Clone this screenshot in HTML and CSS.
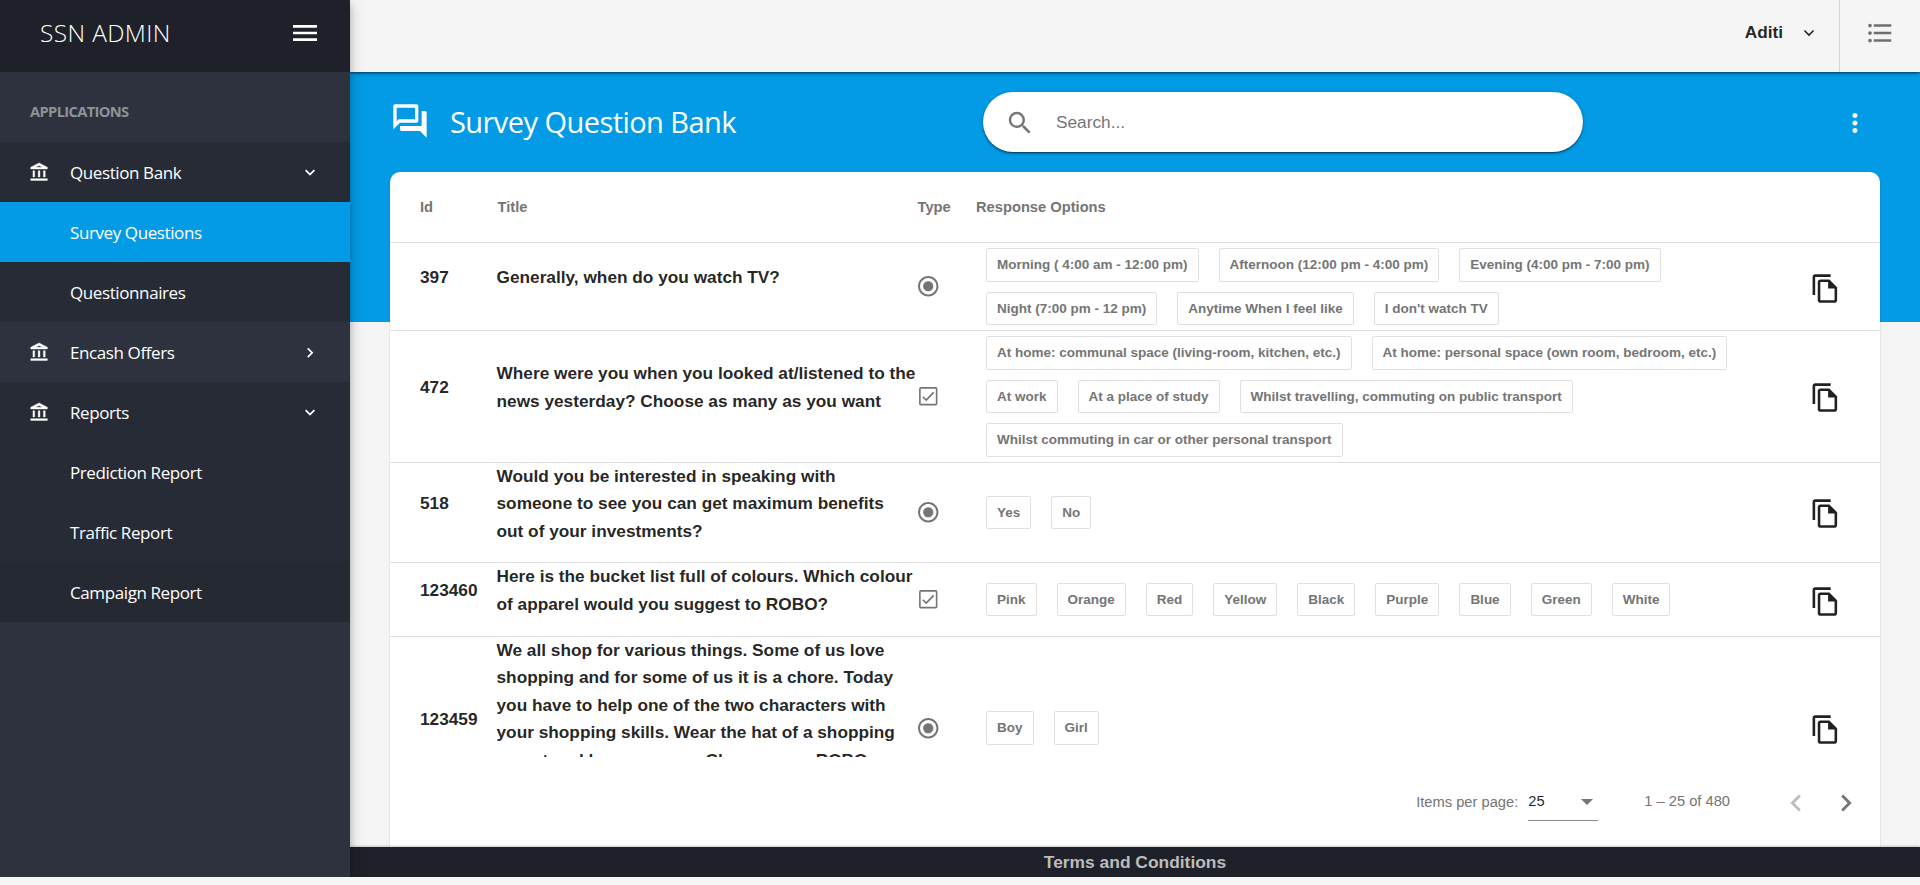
FILE: index.html
```html
<!DOCTYPE html>
<html lang="en">
<head>
<meta charset="utf-8">
<title>Survey Question Bank</title>
<link rel="stylesheet" href="styles.css">
</head>
<body>
<svg class="defs" width="0" height="0">
  <symbol id="bank" viewBox="0 0 24 24"><path stroke="currentColor" stroke-width=".45" d="M6.5 10h-2v7h2v-7zm6 0h-2v7h2v-7zm8.5 9H2v2h19v-2zm-2.5-9h-2v7h2v-7zm-7-6L15.500 6H7.500l4-2m0-3L2 6v2h19V6l-9.5-5z"/></symbol>
  <symbol id="down" viewBox="0 0 24 24"><path d="M7.41 7.84L12 12.42l4.59-4.58L18 9.25l-6 6-6-6z"/></symbol>
  <symbol id="right" viewBox="0 0 24 24"><path d="M8.59 16.34l4.58-4.59-4.58-4.59L10 5.75l6 6-6 6z"/></symbol>
  <symbol id="prev" viewBox="0 0 24 24"><path d="M15.41 7.41L14 6l-6 6 6 6 1.41-1.41L10.83 12z"/></symbol>
  <symbol id="next" viewBox="0 0 24 24"><path d="M10 6L8.59 7.41 13.17 12l-4.58 4.59L10 18l6-6z"/></symbol>
  <symbol id="copy" viewBox="0 0 24 24"><path d="M16 1H4c-1.1 0-2 .9-2 2v14h2V3h12V1zm-1 4H8c-1.1 0-1.99.9-1.99 2L6 21c0 1.1.89 2 1.99 2H19c1.1 0 2-.9 2-2V11l-6-6zM8 21V7h6v5h5v9H8z"/></symbol>
  <symbol id="radio" viewBox="0 0 24 24"><path d="M12 7c-2.76 0-5 2.24-5 5s2.24 5 5 5 5-2.24 5-5-2.24-5-5-5zm0-5C6.48 2 2 6.48 2 12s4.48 10 10 10 10-4.48 10-10S17.52 2 12 2zm0 18c-4.42 0-8-3.58-8-8s3.58-8 8-8 8 3.58 8 8-3.58 8-8 8z"/></symbol>
  <symbol id="check" viewBox="0 0 24 24"><g fill="none" stroke="currentColor"><rect x="3.800" y="3.800" width="16.400" height="16.400" rx="1" stroke-width="1.600"/><path d="M6.700 12.500l3.300 3.300 7.300-7.500" stroke-width="1.700"/></g></symbol>
</svg>
<div class="app">
  <aside class="sidebar">
    <div class="brand">
      <span class="brand-name">SSN ADMIN</span>
      <svg class="icon-menu" viewBox="0 0 24 24"><path d="M3 18h18v-2H3v2zm0-5h18v-2H3v2zm0-7v2h18V6H3z"/></svg>
    </div>
    <nav class="nav">
      <div class="nav-heading">APPLICATIONS</div>
      <div class="nav-group open">
        <a class="nav-item"><svg class="nav-icon"><use href="#bank"/></svg><span class="nav-label">Question Bank</span><svg class="nav-arrow"><use href="#down"/></svg></a>
        <a class="nav-item child active">Survey Questions</a>
        <a class="nav-item child">Questionnaires</a>
      </div>
      <div class="nav-group">
        <a class="nav-item"><svg class="nav-icon"><use href="#bank"/></svg><span class="nav-label">Encash Offers</span><svg class="nav-arrow"><use href="#right"/></svg></a>
      </div>
      <div class="nav-group open">
        <a class="nav-item"><svg class="nav-icon"><use href="#bank"/></svg><span class="nav-label">Reports</span><svg class="nav-arrow"><use href="#down"/></svg></a>
        <a class="nav-item child">Prediction Report</a>
        <a class="nav-item child">Traffic Report</a>
        <a class="nav-item child hovered">Campaign Report</a>
      </div>
    </nav>
  </aside>
  <div class="main">
    <header class="toolbar">
      <div class="user"><span>Aditi</span><svg class="user-arrow" viewBox="0 0 24 24"><path d="M6.500 9l5.500 5.500L17.500 9"/></svg></div>
      <div class="quick"><svg class="icon-30" viewBox="0 0 24 24"><path d="M4 10.5c-.83 0-1.5.67-1.5 1.5s.67 1.5 1.5 1.5 1.5-.67 1.5-1.5-.67-1.5-1.5-1.5zm0-6c-.83 0-1.5.67-1.5 1.5S3.17 7.5 4 7.5 5.500 6.83 5.500 6 4.830 4.500 4 4.500zm0 12c-.83 0-1.5.68-1.5 1.5s.68 1.5 1.5 1.5 1.500-.68 1.500-1.500-.67-1.500-1.500-1.500zM7 19h14v-2H7v2zm0-6h14v-2H7v2zm0-8v2h14V5H7z"/></svg></div>
    </header>
    <section class="page">
      <div class="page-header">
        <svg class="icon-forum" viewBox="0 0 24 24"><path d="M15 4v7H5.170L4 12.170V4h11m1-2H3c-.55 0-1 .45-1 1v14l4-4h10c.55 0 1-.45 1-1V3c0-.55-.45-1-1-1zm5 4h-2v9H6v2c0 .55.45 1 1 1h11l4 4V7c0-.55-.45-1-1-1z"/></svg>
        <h1 class="page-title">Survey Question Bank</h1>
        <div class="search">
          <svg class="icon-30" viewBox="0 0 24 24"><path d="M15.500 14h-.79l-.28-.27A6.471 6.471 0 0 0 16 9.500 6.500 6.500 0 1 0 9.500 16c1.610 0 3.090-.59 4.230-1.570l.27.28v.79l5 4.990L20.490 19l-4.990-5zm-6 0C7.010 14 5 11.990 5 9.500S7.010 5 9.500 5 14 7.010 14 9.500 11.990 14 9.500 14z"/></svg>
          <span>Search...</span>
        </div>
        <svg class="icon-30 icon-more" viewBox="0 0 24 24"><path d="M12 8c1.100 0 2-.9 2-2s-.9-2-2-2-2 .9-2 2 .9 2 2 2zm0 2c-1.100 0-2 .9-2 2s.9 2 2 2 2-.9 2-2-.9-2-2-2zm0 6c-1.100 0-2 .9-2 2s.9 2 2 2 2-.9 2-2-.9-2-2-2z"/></svg>
      </div>
      <div class="card">
        <div class="table">
          <div class="row head"><span>Id</span><span class="head-title">Title</span><span>Type</span><span>Response Options</span><span></span></div>
          <div class="row">
            <p>397</p><p>Generally, when do you watch TV?</p>
            <svg class="type"><use href="#radio"/></svg>
            <div class="chips"><span class="chip">Morning ( 4:00 am - 12:00 pm)</span><span class="chip">Afternoon (12:00 pm - 4:00 pm)</span><span class="chip">Evening (4:00 pm - 7:00 pm)</span><span class="chip">Night (7:00 pm - 12 pm)</span><span class="chip">Anytime When I feel like</span><span class="chip">I don't watch TV</span></div>
            <svg class="copy"><use href="#copy"/></svg>
          </div>
          <div class="row">
            <p>472</p><p>Where were you when you looked at/listened to the news yesterday? Choose as many as you want</p>
            <svg class="type"><use href="#check"/></svg>
            <div class="chips"><span class="chip">At home: communal space (living-room, kitchen, etc.)</span><span class="chip">At home: personal space (own room, bedroom, etc.)</span><span class="chip">At work</span><span class="chip">At a place of study</span><span class="chip">Whilst travelling, commuting on public transport</span><span class="chip">Whilst commuting in car or other personal transport</span></div>
            <svg class="copy"><use href="#copy"/></svg>
          </div>
          <div class="row">
            <p>518</p><p>Would you be interested in speaking with<br>someone to see you can get maximum benefits<br>out of your investments?</p>
            <svg class="type"><use href="#radio"/></svg>
            <div class="chips"><span class="chip">Yes</span><span class="chip">No</span></div>
            <svg class="copy"><use href="#copy"/></svg>
          </div>
          <div class="row">
            <p>123460</p><p>Here is the bucket list full of colours. Which colour of apparel would you suggest to ROBO?</p>
            <svg class="type"><use href="#check"/></svg>
            <div class="chips"><span class="chip">Pink</span><span class="chip">Orange</span><span class="chip">Red</span><span class="chip">Yellow</span><span class="chip">Black</span><span class="chip">Purple</span><span class="chip">Blue</span><span class="chip">Green</span><span class="chip">White</span></div>
            <svg class="copy"><use href="#copy"/></svg>
          </div>
          <div class="row">
            <p>123459</p><p class="long">We all shop for various things. Some of us love shopping and for some of us it is a chore. Today you have to help one of the two characters with your shopping skills. Wear the hat of a shopping expert and here you go... Choose your ROBO</p>
            <svg class="type"><use href="#radio"/></svg>
            <div class="chips"><span class="chip">Boy</span><span class="chip">Girl</span></div>
            <svg class="copy"><use href="#copy"/></svg>
          </div>
        </div>
        <div class="paginator">
          <span>Items per page:</span>
          <div class="select"><span>25</span><i class="caret"></i></div>
          <span class="range">1 – 25 of 480</span>
          <svg class="pager disabled"><use href="#prev"/></svg>
          <svg class="pager"><use href="#next"/></svg>
        </div>
      </div>
    </section>
    <footer class="footer">Terms and Conditions</footer>
  </div>
</div>
</body>
</html>
```
FILE: styles.css
```css
* { box-sizing: border-box; }
body {
  margin: 0;
  background: #f5f5f5;
  color: rgba(0, 0, 0, .87);
  font: 17.25px/27.52px "Liberation Sans", Arial, sans-serif;
  overflow: hidden;
}
svg { fill: currentColor; flex: none; display: block; }
.defs { position: absolute; }
.app { display: flex; height: 877px; }

.sidebar {
  position: relative;
  z-index: 3;
  width: 350px;
  flex: none;
  background: #2d323e;
  color: #fff;
  font-family: "Open Sans", "Noto Sans", sans-serif;
  box-shadow: 0 3px 5px -1px rgba(0,0,0,.2), 0 6px 10px rgba(0,0,0,.14), 0 1px 18px rgba(0,0,0,.12);
}
.brand {
  display: flex;
  align-items: center;
  justify-content: space-between;
  height: 72px;
  padding: 0 29px 6px 40px;
  background: #1e2129;
}
.brand-name { font-size: 24.4px; font-weight: 300; letter-spacing: .4px; }
.icon-menu { width: 32px; height: 32px; }
.nav-heading {
  height: 70px;
  padding: 8px 0 0 30px;
  font-size: 14.7px;
  font-weight: 700;
  line-height: 62px;
  letter-spacing: -.65px;
  color: #8f9298;
}
.nav-group.open { background: #272b35; }
.nav-item {
  display: flex;
  align-items: center;
  height: 60px;
  padding: 1px 30px 0 29px;
  font-size: 17px;
  letter-spacing: -.4px;
}
.nav-item.child { padding-left: 70px; }
.nav-item.active { background: #039be5; }
.nav-item.hovered { background: #252932; }
.nav-icon { width: 21px; height: 21px; margin-right: 20px; }
.nav-label { flex: 1; }
.nav-arrow { width: 20px; height: 20px; }

.main { flex: 1; display: flex; flex-direction: column; min-width: 0; }
.toolbar {
  position: relative;
  z-index: 2;
  display: flex;
  justify-content: flex-end;
  flex: none;
  height: 72px;
  background: #f5f5f5;
  box-shadow: 0 2px 4px -1px rgba(0,0,0,.4), 0 1px 2px rgba(0,0,0,.4);
}
.user { display: flex; align-items: center; gap: 16px; padding: 0 20px 7px 0; font-weight: 700; }
.user-arrow { width: 20px; height: 20px; fill: none; stroke: currentColor; stroke-width: 1.8px; }
.quick { width: 81px; padding: 18px 0 0 25px; border-left: 1px solid #d6d6d6; color: #6f6f6f; }
.icon-30 { width: 30px; height: 30px; }

.page {
  flex: 1;
  display: flex;
  flex-direction: column;
  min-height: 0;
  padding: 0 40px;
  background: linear-gradient(#039be5 250px, #f5f5f5 250px);
}
.page-header { display: flex; align-items: center; flex: none; height: 100px; color: #fff; }
.icon-forum { width: 40px; height: 40px; margin-top: -2px; }
.page-title {
  width: 553px;
  margin: 0;
  padding-left: 20px;
  font: 400 29px/40px "Open Sans", "Noto Sans", sans-serif;
  letter-spacing: -.56px;
}
.search {
  display: flex;
  align-items: center;
  gap: 21px;
  width: 600px;
  height: 60px;
  padding: 1px 0 0 22px;
  border-radius: 30px;
  background: #fff;
  color: #757575;
  box-shadow: 0 3px 1px -2px rgba(0,0,0,.2), 0 2px 2px rgba(0,0,0,.14), 0 1px 5px rgba(0,0,0,.12), 0 1px 2px rgba(0,0,0,.35);
}
.icon-more { margin-left: auto; margin-right: 10px; margin-top: 2px; }

.card {
  flex: 1;
  min-height: 0;
  border-radius: 10px 10px 0 0;
  background: #fff;
  box-shadow: 0 1px 2px rgba(0,0,0,.22);
  overflow: hidden;
}
.table { height: 585px; overflow: hidden; }
.row {
  display: grid;
  grid-template-columns: 76.5px 421px 58.5px 1fr 76px;
  align-items: center;
  padding-left: 30px;
  border-bottom: 1px solid #e0e0e0;
  font-weight: 700;
}
.row p { margin: 0 0 17.4px; }
.row p.long { height: 165.1px; }
.row.head { height: 71px; padding-top: 1px; font-size: 14.7px; color: #757575; }
.head-title { padding-left: 1px; }
.type { width: 24.500px; height: 24.500px; margin-left: -1.500px; color: #757575; }
.chips { display: flex; flex-wrap: wrap; }
.chip {
  margin: 5px 10px;
  padding: 5px 10px;
  border: 1px solid #e0e0e0;
  border-radius: 2px;
  font-size: 13.500px;
  line-height: 21.5px;
  color: #757575;
}
.copy { width: 31px; height: 31px; margin-left: 6px; margin-top: 3px; }

.paginator {
  display: flex;
  align-items: center;
  justify-content: flex-end;
  height: 91px;
  padding-right: 17px;
  font-size: 14.7px;
  color: #757575;
}
.select {
  display: flex;
  align-items: center;
  justify-content: space-between;
  width: 70px;
  height: 36px;
  margin-left: 10px;
  padding-right: 5px;
  border-bottom: 1px solid #8c8c8c;
  color: rgba(0, 0, 0, .87);
}
.caret { border: 6px solid transparent; border-top-color: #757575; border-bottom: 0; }
.range { margin: -2px 49px 0 46px; }
.pager { width: 34px; height: 34px; margin-right: 16px; color: #757575; }
.pager:last-child { margin-right: 0; }
.pager.disabled { color: #bdbdbd; }

.footer {
  position: relative;
  flex: none;
  height: 30px;
  background: #1e2129;
  color: #bcbcbe;
  font-size: 17.4px;
  font-weight: 700;
  line-height: 30px;
  text-align: center;
  box-shadow: 0 0 3px rgba(0,0,0,.35);
}
```
